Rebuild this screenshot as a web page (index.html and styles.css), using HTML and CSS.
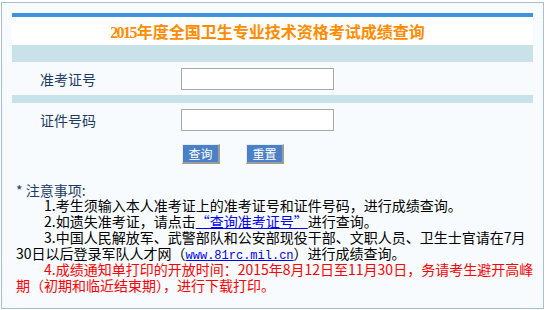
FILE: index.html
```html
<!DOCTYPE html>
<html lang="zh-CN">
<head>
<meta charset="utf-8">
<title>2015年度全国卫生专业技术资格考试成绩查询</title>
<link rel="stylesheet" href="styles.css">
</head>
<body>
<div class="wrap">
  <div class="panel">
    <div class="bar"></div>
    <div class="title"><span class="num">2015</span>年度全国卫生专业技术资格考试成绩查询</div>
    <div class="band band-top"></div>
    <div class="row row-1">
      <label class="label" for="zkz">准考证号</label>
      <input class="field" id="zkz" type="text">
    </div>
    <div class="band band-mid"></div>
    <div class="row row-2">
      <label class="label" for="zjh">证件号码</label>
      <input class="field" id="zjh" type="text">
    </div>
    <div class="actions">
      <button class="btn" type="button">查询</button>
      <button class="btn" type="button">重置</button>
    </div>
  </div>
  <div class="notes">
    <div class="notes-head">* 注意事项:</div>
    <div class="line ind">1.考生须输入本人准考证上的准考证号和证件号码，进行成绩查询。</div>
    <div class="line ind">2.如遗失准考证，请点击<a class="link" href="#">“查询准考证号”</a>进行查询。</div>
    <div class="line ind">3.中国人民解放军、武警部队和公安部现役干部、文职人员、卫生士官请在7月</div>
    <div class="line">30日以后登录军队人才网（<a class="link mono" href="#">www.81rc.mil.cn</a>）进行成绩查询。</div>
    <div class="line ind red">4.成绩通知单打印的开放时间：2015年8月12日至11月30日，务请考生避开高峰</div>
    <div class="line red">期（初期和临近结束期），进行下载打印。</div>
  </div>
</div>
</body>
</html>
```

FILE: styles.css
```css
html, body {
  margin: 0;
  padding: 0;
  background: #ffffff;
}

body {
  font-family: "Noto Sans CJK SC", "Noto Sans", sans-serif;
  font-size: 14px;
}

.wrap {
  box-sizing: border-box;
  width: 543px;
  height: 307px;
  margin: 2px 0 0 1px;
  border: 1px solid #a8bfcd;
  background: #f7fbfd;
  padding: 10px 10px 0 10px;
}

.panel {
  width: 521px;
}

.bar {
  height: 4px;
  background: #3e94dc;
}

.title {
  height: 28px;
  background: #ffffff;
  color: #ff8c00;
  font-weight: bold;
  font-size: 16px;
  line-height: 28px;
  text-align: center;
  padding-right: 10px;
  box-sizing: border-box;
}

.title .num {
  font-family: "Liberation Serif", serif;
  letter-spacing: -1.6px;
  margin-right: 1px;
}

.band {
  background: #c9e2e9;
}

.band-top {
  height: 17px;
}

.band-mid {
  height: 8px;
}

.row {
  display: flex;
  align-items: center;
}

.row-1 {
  height: 33px;
}

.row-2 {
  height: 34px;
}

.label {
  box-sizing: border-box;
  width: 169px;
  padding-left: 28px;
  color: #1d3b64;
  font-size: 14px;
}

.field {
  box-sizing: border-box;
  width: 153px;
  height: 22px;
  margin: 0;
  padding: 0 3px;
  border: 1px solid #a8a8a8;
  background: #ffffff;
  font-size: 13px;
}

.actions {
  display: flex;
  gap: 26px;
  padding: 7px 0 0 170px;
  height: 20px;
}

.btn {
  box-sizing: border-box;
  width: 38px;
  height: 20px;
  margin: 0;
  padding: 0;
  background: #4a80c7;
  color: #ffffff;
  font-family: "Noto Sans CJK SC", sans-serif;
  font-size: 12px;
  line-height: 17px;
  border-style: solid;
  border-width: 1px 2px 2px 1px;
  border-color: #e6edf4 #9c9c9c #9c9c9c #e6edf4;
}

.notes {
  margin: 19px 0 0 4px;
  color: #000000;
  font-size: 14px;
}

.notes-head {
  color: #1d3b6a;
  line-height: 14px;
  height: 14px;
}

.line {
  line-height: 16px;
  height: 16px;
  white-space: nowrap;
}

.ind {
  padding-left: 28px;
}

.red {
  color: #ff0000;
}

.link {
  color: #0000ff;
  text-decoration: underline;
}

.mono {
  font-family: "Liberation Mono", monospace;
  font-size: 12px;
}
```
